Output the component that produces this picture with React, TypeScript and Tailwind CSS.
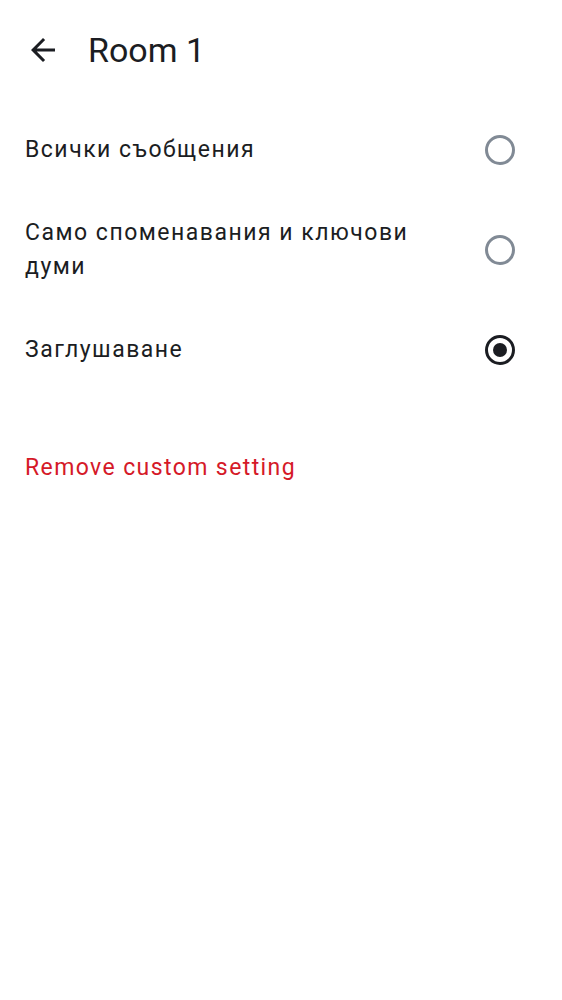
import React, { useState } from 'react';

const options = [
  { id: 'all', label: 'Всички съобщения' },
  { id: 'mentions', label: 'Само споменавания и ключови думи' },
  { id: 'mute', label: 'Заглушаване' },
];

function Radio({ checked }: { checked: boolean }) {
  return (
    <div
      className={`w-[30px] h-[30px] rounded-full border-[3px] flex items-center justify-center shrink-0 ${
        checked ? 'border-[#1b1d22]' : 'border-[#818a95]'
      }`}
    >
      {checked && <div className="w-[14px] h-[14px] rounded-full bg-[#1b1d22]" />}
    </div>
  );
}

export default function App() {
  const [selected, setSelected] = useState('mute');

  return (
    <div className="min-h-screen bg-white text-[#1b1d22]" style={{ fontFamily: 'Roboto, "Noto Sans", sans-serif' }}>
      {/* Header */}
      <header className="h-[100px] flex items-center pl-[25px]">
        <button className="w-[36px] h-[36px] flex items-center justify-center">
          <svg width="36" height="36" viewBox="0 0 24 24" fill="none">
            <path d="M20 11H7.83l5.59-5.59L12 4l-8 8 8 8 1.41-1.41L7.83 13H20v-2z" fill="#1b1d22" />
          </svg>
        </button>
        <h1 className="ml-[27px] text-[34px] leading-none">Room 1</h1>
      </header>

      {/* Options */}
      <div>
        {options.map((opt) => (
          <button
            key={opt.id}
            onClick={() => setSelected(opt.id)}
            className="w-full h-[100px] flex items-center justify-between pl-[25px] pr-[47px] text-left"
          >
            <span className="text-[23px] leading-[34px] tracking-[1.5px] max-w-[400px]">{opt.label}</span>
            <Radio checked={selected === opt.id} />
          </button>
        ))}
      </div>

      <div className="pt-[50px] pl-[25px]">
        <button className="text-[23px] leading-[36px] text-[#d51928] tracking-[1.4px]">Remove custom setting</button>
      </div>
    </div>
  );
}
